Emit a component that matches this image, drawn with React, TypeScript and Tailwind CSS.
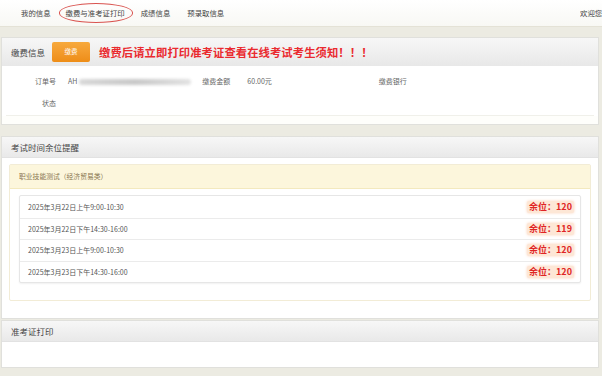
import React from 'react';

const font = { fontFamily: '"Noto Sans CJK SC", "Liberation Sans", sans-serif' };

const slots = [
  { time: '2025年3月22日上午9:00-10:30', left: 120 },
  { time: '2025年3月22日下午14:30-16:00', left: 119 },
  { time: '2025年3月23日上午9:00-10:30', left: 120 },
  { time: '2025年3月23日下午14:30-16:00', left: 120 },
];

function PanelHeader({ children }: { children: React.ReactNode }) {
  return (
    <div className="flex h-[21px] items-center border-b border-[#e2e2e2] bg-gradient-to-b from-[#f7f7f7] to-[#e9e9e9] px-[9px] text-[8.5px] text-[#444]">
      {children}
    </div>
  );
}

export default function App() {
  return (
    <div className="h-[376px] w-[602px] overflow-hidden bg-[#ecebe2] text-[#555]" style={font}>
      {/* top nav */}
      <div className="flex h-[27px] items-center border-b border-[#e4e2d6] bg-gradient-to-b from-white to-[#f8f8f4] pl-[21px] pr-0 text-[7.4px] text-[#444]">
        <span>我的信息</span>
        <span className="relative ml-[15px]">
          缴费与准考证打印
          <span className="absolute -left-[7px] -right-[8px] -top-[4px] -bottom-[4px] rounded-[50%] border border-[#d9534f]" />
        </span>
        <span className="ml-[16px]">成绩信息</span>
        <span className="ml-[17px]">预录取信息</span>
        <span className="ml-auto w-[22px] overflow-hidden whitespace-nowrap">欢迎您</span>
      </div>

      {/* payment info */}
      <div className="ml-[1px] mr-[3px] mt-[10px] border border-[#e0e0dc] bg-white">
        <div className="flex h-[28px] items-center bg-gradient-to-b from-[#f7f7f7] to-[#e8e8e8] px-[9px]">
          <span className="text-[8.5px] text-[#444]">缴费信息</span>
          <button className="ml-[7px] flex h-[20px] w-[38px] items-center justify-center rounded-[2px] bg-gradient-to-b from-[#f7a93c] to-[#ee8d16] text-[6.5px] text-white">
            缴费
          </button>
          <span className="ml-[9px] text-[11.3px] font-bold tracking-[0.1px] text-[#ea2a2f]">
            缴费后请立即打印准考证查看在线考试考生须知！！！
          </span>
        </div>
        <div className="mx-[4px] h-[50px] border-b border-[#f0f0ea] text-[7px] text-[#666]">
          <div className="flex h-[27px] items-center pt-[4px]">
            <span className="w-[50px] text-right">订单号</span>
            <span className="ml-[12px] flex items-center">
              AH
              <span className="ml-[2px] h-[6px] w-[112px] rounded-sm bg-gradient-to-r from-[#d8d8d8] via-[#c8c8c8] to-[#e2e2e2] blur-[1.5px]" />
            </span>
            <span className="ml-[11px] w-[30px]">缴费金额</span>
            <span className="ml-[15px]">60.00元</span>
            <span className="ml-[107px]">缴费银行</span>
          </div>
          <div className="flex h-[20px] items-center">
            <span className="w-[50px] text-right">状态</span>
          </div>
        </div>
        <div className="h-[8px] bg-[#fefefb]" />
      </div>

      {/* seat reminders */}
      <div className="ml-[1px] mr-[3px] mt-[11px] border border-[#e0e0dc] bg-white">
        <PanelHeader>考试时间余位提醒</PanelHeader>
        <div className="px-[7px] pb-[17px] pt-[6px]">
          <div className="rounded-[2px] border border-[#f2ecd6] pb-[17px]">
            <div className="flex h-[24px] items-center border-b border-[#f3e9be] bg-[#fcf6dc] px-[9px] text-[6.8px] text-[#8a7650]">
              职业技能测试（经济贸易类）
            </div>
            <div className="mx-[9px] mt-[6px] rounded-[2px] border border-[#e6e6e6] bg-white shadow-[0_1px_2px_rgba(0,0,0,0.06)]">
              {slots.map((s, i) => (
                <div
                  key={i}
                  className={`flex h-[21.5px] items-center justify-between pl-[8px] pr-[6px] text-[7px] text-[#555] ${i > 0 ? 'border-t border-[#ebebeb]' : ''}`}
                >
                  <span>{s.time}</span>
                  <span className="rounded-[2px] bg-[#fde7d6] px-[2px] text-[9px] font-bold leading-[12px] text-[#e02424] shadow-[0_0_3px_#fbd2b8]">
                    余位：{s.left}
                  </span>
                </div>
              ))}
            </div>
          </div>
        </div>
      </div>

      {/* admission ticket */}
      <div className="ml-[1px] mr-[3px] mt-[1px] border border-[#e0e0dc] bg-white">
        <PanelHeader>准考证打印</PanelHeader>
        <div className="h-[25px]" />
      </div>
    </div>
  );
}
